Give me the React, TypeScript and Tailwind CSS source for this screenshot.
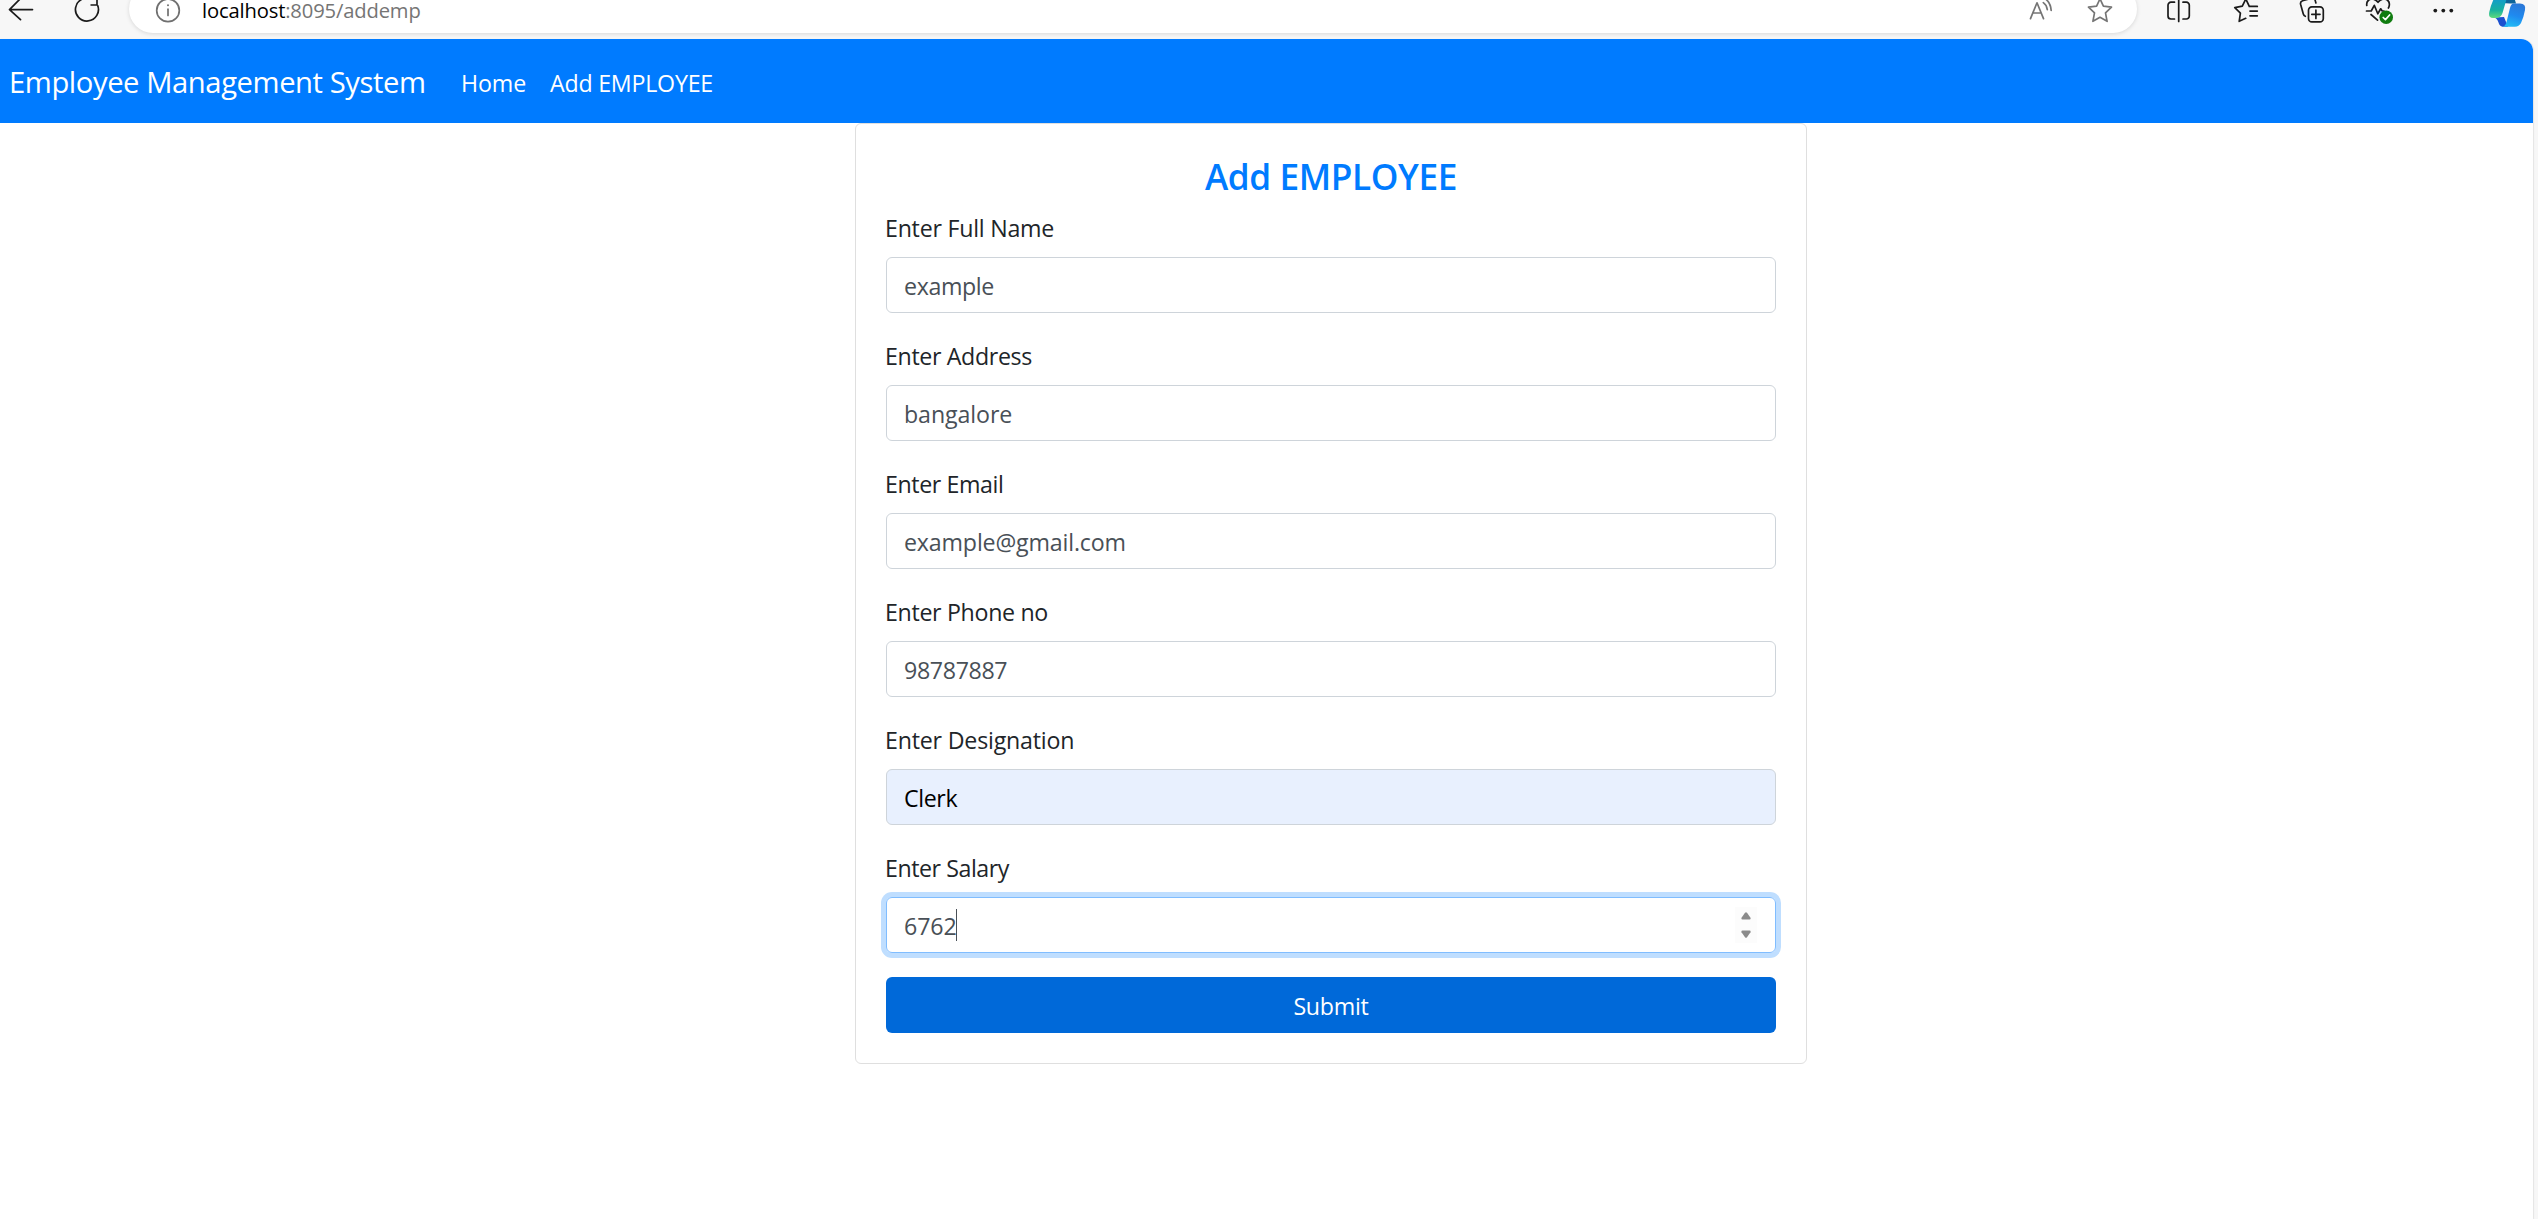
import type { ReactNode } from "react";

type IconProps = { box: string; className: string; children: ReactNode };

function Icon({ box, className, children }: IconProps) {
  return (
    <svg
      viewBox={box}
      className={`h-[39px] shrink-0 ${className}`}
      fill="none"
      stroke="currentColor"
      strokeWidth="1.7"
      strokeLinecap="round"
      strokeLinejoin="round"
    >
      {children}
    </svg>
  );
}

function BrowserBar() {
  return (
    <header className="flex h-[39px] items-start overflow-hidden bg-[#f7f7f7] text-[#1b1b1b]">
      <Icon box="0 0 60 39" className="w-[60px]">
        <path d="M20.5 -1.5 9.5 9.6 20.5 19.7M9.5 9.6H32.5" />
      </Icon>
      <Icon box="60 0 69 39" className="w-[69px]">
        <path d="M97.6 5.2A11.5 11.5 0 1 1 92 -.8M97 -3V5H90.5" strokeLinecap="butt" />
      </Icon>
      <div className="-mt-[15px] flex h-12 w-[2008px] shrink-0 items-start rounded-3xl bg-white pt-[15px] shadow-[0_1px_4px_rgba(0,0,0,0.13)]">
        <Icon box="129 0 73 39" className="w-[73px] text-[#707070]">
          <circle cx="168" cy="10.4" r="11.3" />
          <path d="M168 9.2V15.5" />
          <circle cx="168" cy="5.2" r="1" fill="currentColor" stroke="none" />
        </Icon>
        <p className="flex-1 text-[20.2px] leading-[20px] tracking-[-0.15px] text-[#757575]">
          <span className="text-black">localhost</span>:8095/addemp
        </p>
        <Icon box="2020 0 60 39" className="w-[60px] text-[#757575]">
          <path d="M2030.5 18.6 2037 2.8 2043.5 18.6M2032.8 13H2041.2M2043.3 2.6Q2046.6 4.8 2047.3 9.6M2045 -1.5Q2050.6 2.4 2051.2 10.5" />
        </Icon>
        <Icon box="2080 0 57 39" className="w-[57px] text-[#757575]">
          <path d="M2100 -1.2 2103.4 6.2 2111.5 7.2 2105.5 12.9 2107.1 21.3 2100 17.3 2092.9 21.3 2094.5 12.9 2088.5 7.2 2096.6 6.2Z" />
        </Icon>
      </div>
      <Icon box="2137 0 85 39" className="w-[85px]">
        <path d="M2174.5 2.2H2171A3 3 0 0 0 2168 5.2V16A3 3 0 0 0 2171 19H2174.5M2183 2.2H2186.3A3 3 0 0 1 2189.3 5.2V16A3 3 0 0 1 2186.3 19H2183M2178.7 -2V21.5" />
      </Icon>
      <Icon box="2222 0 68 39" className="w-[68px]">
        <path d="M2249.3 6.4H2257.3M2250 11.1H2257.3M2250 15.8H2257.3M2245.7 18.3 2239.2 21.3 2240.4 13.2 2234.8 7.7 2242.3 6.2 2245.8 -1 2249.3 6.4" />
      </Icon>
      <Icon box="2290 0 67 39" className="w-[67px]">
        <rect x="2308.5" y="6.8" width="14.8" height="15" rx="3.4" />
        <path d="M2315.9 10.2V18.4M2311.8 14.3H2320M2305.3 16.3Q2303.8 15.8 2303.3 14L2300.6 4.2Q2300 1.6 2302.6 .8L2311.5 -1.8Q2314.3 -2.3 2315.2 .4L2315.9 3" />
      </Icon>
      <Icon box="2357 0 63 39" className="w-[63px]">
        <path d="M2366.8 5.5C2366 .5 2370 -1.5 2373.5 -.8Q2376 -.2 2378 2.3Q2380 -.2 2382.5 -.8C2386 -1.5 2390.3 .6 2389.2 5.8Q2389 7 2388.4 8M2366.5 11H2371.2L2374.3 5.3 2377.8 13.8 2380.7 8.8 2382.2 11H2384M2371 14.5 2377.5 20.2" />
        <circle cx="2386.2" cy="17.2" r="6.8" fill="#107c10" stroke="none" />
        <path d="M2383.2 17.5 2385.4 19.6 2389.6 15" stroke="#fff" />
      </Icon>
      <Icon box="2420 0 60 39" className="w-[60px]">
        <g fill="currentColor" stroke="none">
          <circle cx="2435.3" cy="10.6" r="1.9" />
          <circle cx="2443.3" cy="10.6" r="1.9" />
          <circle cx="2451.3" cy="10.6" r="1.9" />
        </g>
      </Icon>
      <Icon box="2480 0 58 39" className="w-[58px]">
        <defs>
          <linearGradient id="leafGreen" x1="0" y1="0" x2="0" y2="1">
            <stop offset="0.25" stopColor="#129fc4" />
            <stop offset="0.65" stopColor="#16b0a0" />
            <stop offset="1" stopColor="#5fda7c" />
          </linearGradient>
          <linearGradient id="leafBlue" x1="0.6" y1="0" x2="0.3" y2="1">
            <stop offset="0" stopColor="#2a78d8" />
            <stop offset="0.5" stopColor="#1f8af0" />
            <stop offset="1" stopColor="#22bdf5" />
          </linearGradient>
        </defs>
        <g stroke="none">
          <path d="M2502 -4H2512Q2514.500 -3 2516 3.600H2510L2502 3Z" fill="#0d6499" />
          <path d="M2494 17.500 2504 17 2508 26.700H2502.500Q2499.600 26.500 2498.500 22.500 2497 18 2494 17.500Z" fill="#1b50cf" />
          <path d="M2496 -5H2509Q2507 -3 2506 1L2502.500 13Q2501 18 2495.500 18H2493Q2488 18 2489.300 12Q2491.500 2 2496 -5Z" fill="url(#leafGreen)" />
          <path d="M2513 3.500H2520Q2526.300 3.500 2525 10Q2523.500 18 2521 23Q2519 26.700 2515 26.700H2502.500Q2505.500 26 2506.500 22L2510 8Q2511 4 2513 3.500Z" fill="url(#leafBlue)" />
        </g>
      </Icon>
    </header>
  );
}

function NavBar() {
  return (
    <nav className="flex h-[84px] items-center rounded-tr-xl bg-[#007bff] pl-[9px] text-white">
      <a className="w-[452px] pt-0.5 text-[29.2px] leading-[45px] tracking-[-0.42px]">Employee Management System</a>
      <a className="w-[89px] pt-[3px] text-[23.2px] leading-9 tracking-[-0.1px]">Home</a>
      <a className="pt-[3px] text-[23.2px] leading-9 tracking-[-0.22px]">Add EMPLOYEE</a>
    </nav>
  );
}

type FieldProps = { label: string; value: string; labelClass: string; valueClass: string };

function Field({ label, value, labelClass, valueClass }: FieldProps) {
  return (
    <div className="mb-[31px]">
      <label className={`-ml-px mb-4 block h-[25px] text-[23.2px] leading-[25px] text-[#212529] ${labelClass}`}>{label}</label>
      <div className={`flex h-14 items-center rounded-md border border-[#ced4da] pt-0.5 pl-[17px] text-[23.2px] ${valueClass}`}>
        {value}
      </div>
    </div>
  );
}

function EmployeeForm() {
  return (
    <section className="mx-auto h-[941px] w-[952px] rounded-md border border-[#dfdfdf] bg-white px-[30px] pt-[30px]">
      <h1 className="mb-[17px] h-[45px] text-center text-[35.2px] leading-[45px] font-semibold tracking-[-0.4px] text-[#007bff]">
        Add EMPLOYEE
      </h1>
      <div>
        <Field label="Enter Full Name" value="example" labelClass="tracking-[-0.24px]" valueClass="tracking-[-0.37px] text-[#495057]" />
        <Field label="Enter Address" value="bangalore" labelClass="tracking-[-0.35px]" valueClass="tracking-[-0.09px] text-[#495057]" />
        <Field label="Enter Email" value="example@gmail.com" labelClass="tracking-[-0.39px]" valueClass="tracking-[-0.16px] text-[#495057]" />
        <Field label="Enter Phone no" value="98787887" labelClass="tracking-[-0.32px]" valueClass="tracking-[-0.35px] text-[#495057]" />
        <Field label="Enter Designation" value="Clerk" labelClass="tracking-[-0.2px]" valueClass="tracking-[-0.39px] bg-[#e8f0fe] text-black" />
        <label className="-ml-px mb-4 block h-[25px] text-[23.2px] leading-[25px] tracking-[-0.45px] text-[#212529]">Enter Salary</label>
        <div className="flex h-14 items-center rounded-md border border-[#80bdff] pr-[18px] pl-[17px] text-[23.2px] tracking-[-0.13px] text-[#495057] shadow-[0_0_0_5px_#bfdeff]">
          <span className="pt-0.5">6762</span>
          <span className="-ml-px h-8 w-px bg-[#495057]" />
          <span className="ml-auto flex h-9 w-[22px] flex-col items-center justify-between bg-[#fcfcfc] py-[5px] text-[#8b8b8b]">
            <svg viewBox="0 0 10 8" className="h-2 w-2.5" fill="currentColor">
              <path d="M4 .7Q5 -.4 6 .7L9.500 5.700Q10 7.500 8.500 7.500H1.500Q0 7.500 .5 5.700Z" />
            </svg>
            <svg viewBox="0 0 10 8" className="h-2 w-2.5" fill="currentColor">
              <path d="M4 7.300Q5 8.400 6 7.300L9.500 2.300Q10 .5 8.500 .5H1.500Q0 .5 .5 2.300Z" />
            </svg>
          </span>
        </div>
        <button className="mt-6 block h-14 w-full rounded-md bg-[#0069d9] pt-0.5 text-[23.2px] tracking-[-0.25px] text-white">
          Submit
        </button>
      </div>
    </section>
  );
}

export default function App() {
  return (
    <div className="h-[1219px] w-[2538px] overflow-hidden bg-[#f7f7f7] font-['Open_Sans','Noto_Sans',sans-serif]">
      <BrowserBar />
      <main className="h-[1180px] w-[2533px] rounded-tr-xl bg-white shadow-[1px_0_1px_#e4e4e4]">
        <NavBar />
        <div className="pl-[129px]">
          <EmployeeForm />
        </div>
      </main>
    </div>
  );
}
